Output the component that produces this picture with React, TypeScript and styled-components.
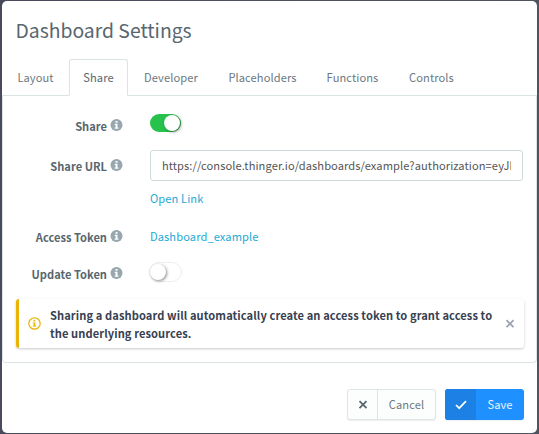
import React from 'react';
import styled, { createGlobalStyle, css } from 'styled-components';

const GlobalStyle = createGlobalStyle`
  *, *::before, *::after { box-sizing: border-box; }
  html, body { margin: 0; height: 434px; overflow: hidden; }
  body {
    background: linear-gradient(100deg, #484a5c, #4e515e 50%, #505460);
    font-family: "Noto Sans CJK SC", "Open Sans", sans-serif;
    font-size: 11.1px;
    letter-spacing: 0.1px;
    line-height: 18px;
    color: #58666e;
  }
`;

const Modal = styled.main`
  width: 535px;
  height: 432px;
  margin: 1px 2px;
  background: #fff;
  border-radius: 5px;
  display: flex;
  flex-direction: column;
`;

const Title = styled.h1`
  margin: 0;
  padding: 14px 13.5px 0;
  height: 58px;
  font-size: 19.35px;
  letter-spacing: 0;
  line-height: 30px;
  font-weight: 400;
  white-space: nowrap;
`;

const Tabs = styled.nav`
  display: flex;
  height: 37px;
  border-bottom: 1px solid #dbe3e5;
`;

const Tab = styled.button<{ $width: number; $active?: boolean }>`
  width: ${p => p.$width}px;
  height: 37px;
  flex: none;
  padding: 0;
  border: 1px solid transparent;
  border-radius: 3px 3px 0 0;
  background: transparent;
  color: #6b787f;
  font: inherit;
  letter-spacing: inherit;
  line-height: 33px;
  white-space: nowrap;
  ${p => p.$active && css`
    color: #58666e;
    background: #fff;
    border-color: #dbe3e5;
    border-bottom-color: #fff;
  `}
`;

const Panel = styled.section`
  height: 267px;
  padding: 0 13px;
  border: 1px solid #dbe3e5;
  border-top: 0;
  border-radius: 0 0 4px 4px;
`;

const Row = styled.div<{ $height: number }>`
  display: grid;
  grid-template-columns: 107px 373px;
  column-gap: 27px;
  align-items: center;
  height: ${p => p.$height}px;
`;

const Label = styled.div<{ $drop?: number }>`
  display: flex;
  justify-content: flex-end;
  align-items: center;
  gap: 3px;
  padding-top: ${p => p.$drop ?? 0}px;
  font-weight: 700;
  letter-spacing: 0.02px;
  white-space: nowrap;

  svg { margin-bottom: 1px; }
`;

const Switch = styled.span<{ $on?: boolean }>`
  display: flex;
  align-items: center;
  justify-content: ${p => (p.$on ? 'flex-end' : 'flex-start')};
  width: ${p => (p.$on ? 31 : 33)}px;
  height: ${p => (p.$on ? 18 : 20)}px;
  margin-left: ${p => (p.$on ? 0 : -1)}px;
  margin-bottom: ${p => (p.$on ? 0 : 3)}px;
  padding: ${p => (p.$on ? '1px' : '0')};
  border: ${p => (p.$on ? '0' : '1px solid #eeeeee')};
  border-radius: 10px;
  background: ${p => (p.$on ? '#27c24c' : '#fff')};
  &::after {
    content: '';
    width: 16px;
    height: 16px;
    border-radius: 50%;
    background: #fff;
    box-shadow: 1px 1px 3px rgba(0, 0, 0, 0.45);
  }
`;

const UrlField = styled.div`
  height: 31px;
  padding: 0 11px;
  border: 1px solid #cfdadd;
  border-radius: 3px;
  line-height: 29px;
  letter-spacing: 0.09px;
  color: #555;
`;

const UrlText = styled.div`
  overflow: hidden;
  white-space: nowrap;
`;

const Link = styled.a`
  color: #23a9d6;
  white-space: nowrap;
  padding-bottom: 2px;
`;

const Notice = styled.div`
  display: flex;
  align-items: center;
  width: 508px;
  height: 49px;
  margin-top: 8px;
  padding: 0 9px 0 9px;
  border-left: 3px solid #eab308;
  border-radius: 3px;
  box-shadow: 0 1px 3px rgba(0, 0, 0, 0.14), 0 1px 2px rgba(0, 0, 0, 0.08);
  color: #374151;
  font-weight: 700;

  svg { flex: none; }
`;

const NoticeText = styled.p`
  margin: 0 0 0 9px;
  flex: 1;
  letter-spacing: 0.09px;
  white-space: nowrap;
`;

const Footer = styled.footer`
  display: flex;
  justify-content: flex-end;
  gap: 9px;
  padding: 26px 13px 0 0;
`;

const Button = styled.button<{ $primary?: boolean }>`
  display: flex;
  width: ${p => (p.$primary ? 79 : 89)}px;
  height: 31px;
  padding: 0;
  overflow: hidden;
  font: inherit;
  letter-spacing: inherit;
  border-radius: 3px;
  border: ${p => (p.$primary ? '0' : '1px solid #dee5e7')};
  background: ${p => (p.$primary ? '#1f90ff' : '#fcfdfd')};
  color: ${p => (p.$primary ? '#eaf4ff' : '#6b787f')};
  box-shadow: 0 1px 1px rgba(90, 90, 90, 0.1);
`;

const ButtonIcon = styled.span<{ $primary?: boolean }>`
  display: flex;
  align-items: center;
  justify-content: center;
  width: ${p => (p.$primary ? 31 : 30)}px;
  height: 100%;
  background: ${p => (p.$primary ? '#1d80e4' : 'transparent')};
  border-right: ${p => (p.$primary ? '0' : '1px solid #dee5e7')};
`;

const ButtonText = styled.span`
  flex: 1;
  align-self: center;
  text-align: center;
  line-height: 29px;
`;

const InfoIcon = () => (
  <svg width="13" height="12" viewBox="-0.5 0 13 12">
    <circle cx="6" cy="6" r="6" fill="#98a6ad" />
    <path d="M4.2 4.8H7v3.6h.9v1.3H4.2V8.4h.9V6.1h-.9zM5.1 2h1.9v1.8H5.1z" fill="#fff" />
  </svg>
);

const NoticeIcon = () => (
  <svg width="13" height="13" viewBox="0 0 13 13">
    <circle cx="6.5" cy="6.5" r="5.7" fill="none" stroke="#eab308" strokeWidth="1.2" />
    <path d="M4.7 5.4h2.6v3.1h.9v1.1H4.7V8.5h1V6.5h-1zM5.6 3.1h1.7v1.5H5.6z" fill="#eab308" />
  </svg>
);

const CrossIcon = ({ color }: { color: string }) => (
  <svg width="10" height="10" viewBox="0 0 10 10">
    <path d="M1.5 1.2l7 7M8.5 1.2l-7 7" stroke={color} strokeWidth="1.8" />
  </svg>
);

const CheckIcon = () => (
  <svg width="12" height="12" viewBox="0 0 12 12">
    <path d="M1 6l3.2 3.2L11 2.2" fill="none" stroke="#fff" strokeWidth="1.7" />
  </svg>
);

const tabs = [
  { name: 'Layout', width: 67 },
  { name: 'Share', width: 59 },
  { name: 'Developer', width: 86 },
  { name: 'Placeholders', width: 97 },
  { name: 'Functions', width: 83 },
  { name: 'Controls', width: 75 },
];

export default function App() {
  return (
    <>
      <GlobalStyle />
      <Modal>
        <Title>Dashboard Settings</Title>
        <Tabs>
          {tabs.map(t => (
            <Tab key={t.name} $width={t.width} $active={t.name === 'Share'}>{t.name}</Tab>
          ))}
        </Tabs>
        <Panel>
          <Row $height={54}>
            <Label $drop={5}>Share <InfoIcon /></Label>
            <Switch $on />
          </Row>
          <Row $height={31}>
            <Label>Share URL <InfoIcon /></Label>
            <UrlField>
              <UrlText>https://console.thinger.io/dashboards/example?authorization=eyJhbGciOiJIUzI1NiJ9</UrlText>
            </UrlField>
          </Row>
          <Row $height={36}>
            <span />
            <Link>Open Link</Link>
          </Row>
          <Row $height={39}>
            <Label>Access Token <InfoIcon /></Label>
            <Link>Dashboard_example</Link>
          </Row>
          <Row $height={35}>
            <Label>Update Token <InfoIcon /></Label>
            <Switch />
          </Row>
          <Notice>
            <NoticeIcon />
            <NoticeText>
              Sharing a dashboard will automatically create an access token to grant access to
              <br />
              the underlying resources.
            </NoticeText>
            <CrossIcon color="#9ca3af" />
          </Notice>
        </Panel>
        <Footer>
          <Button>
            <ButtonIcon><CrossIcon color="#58666e" /></ButtonIcon>
            <ButtonText>Cancel</ButtonText>
          </Button>
          <Button $primary>
            <ButtonIcon $primary><CheckIcon /></ButtonIcon>
            <ButtonText>Save</ButtonText>
          </Button>
        </Footer>
      </Modal>
    </>
  );
}
